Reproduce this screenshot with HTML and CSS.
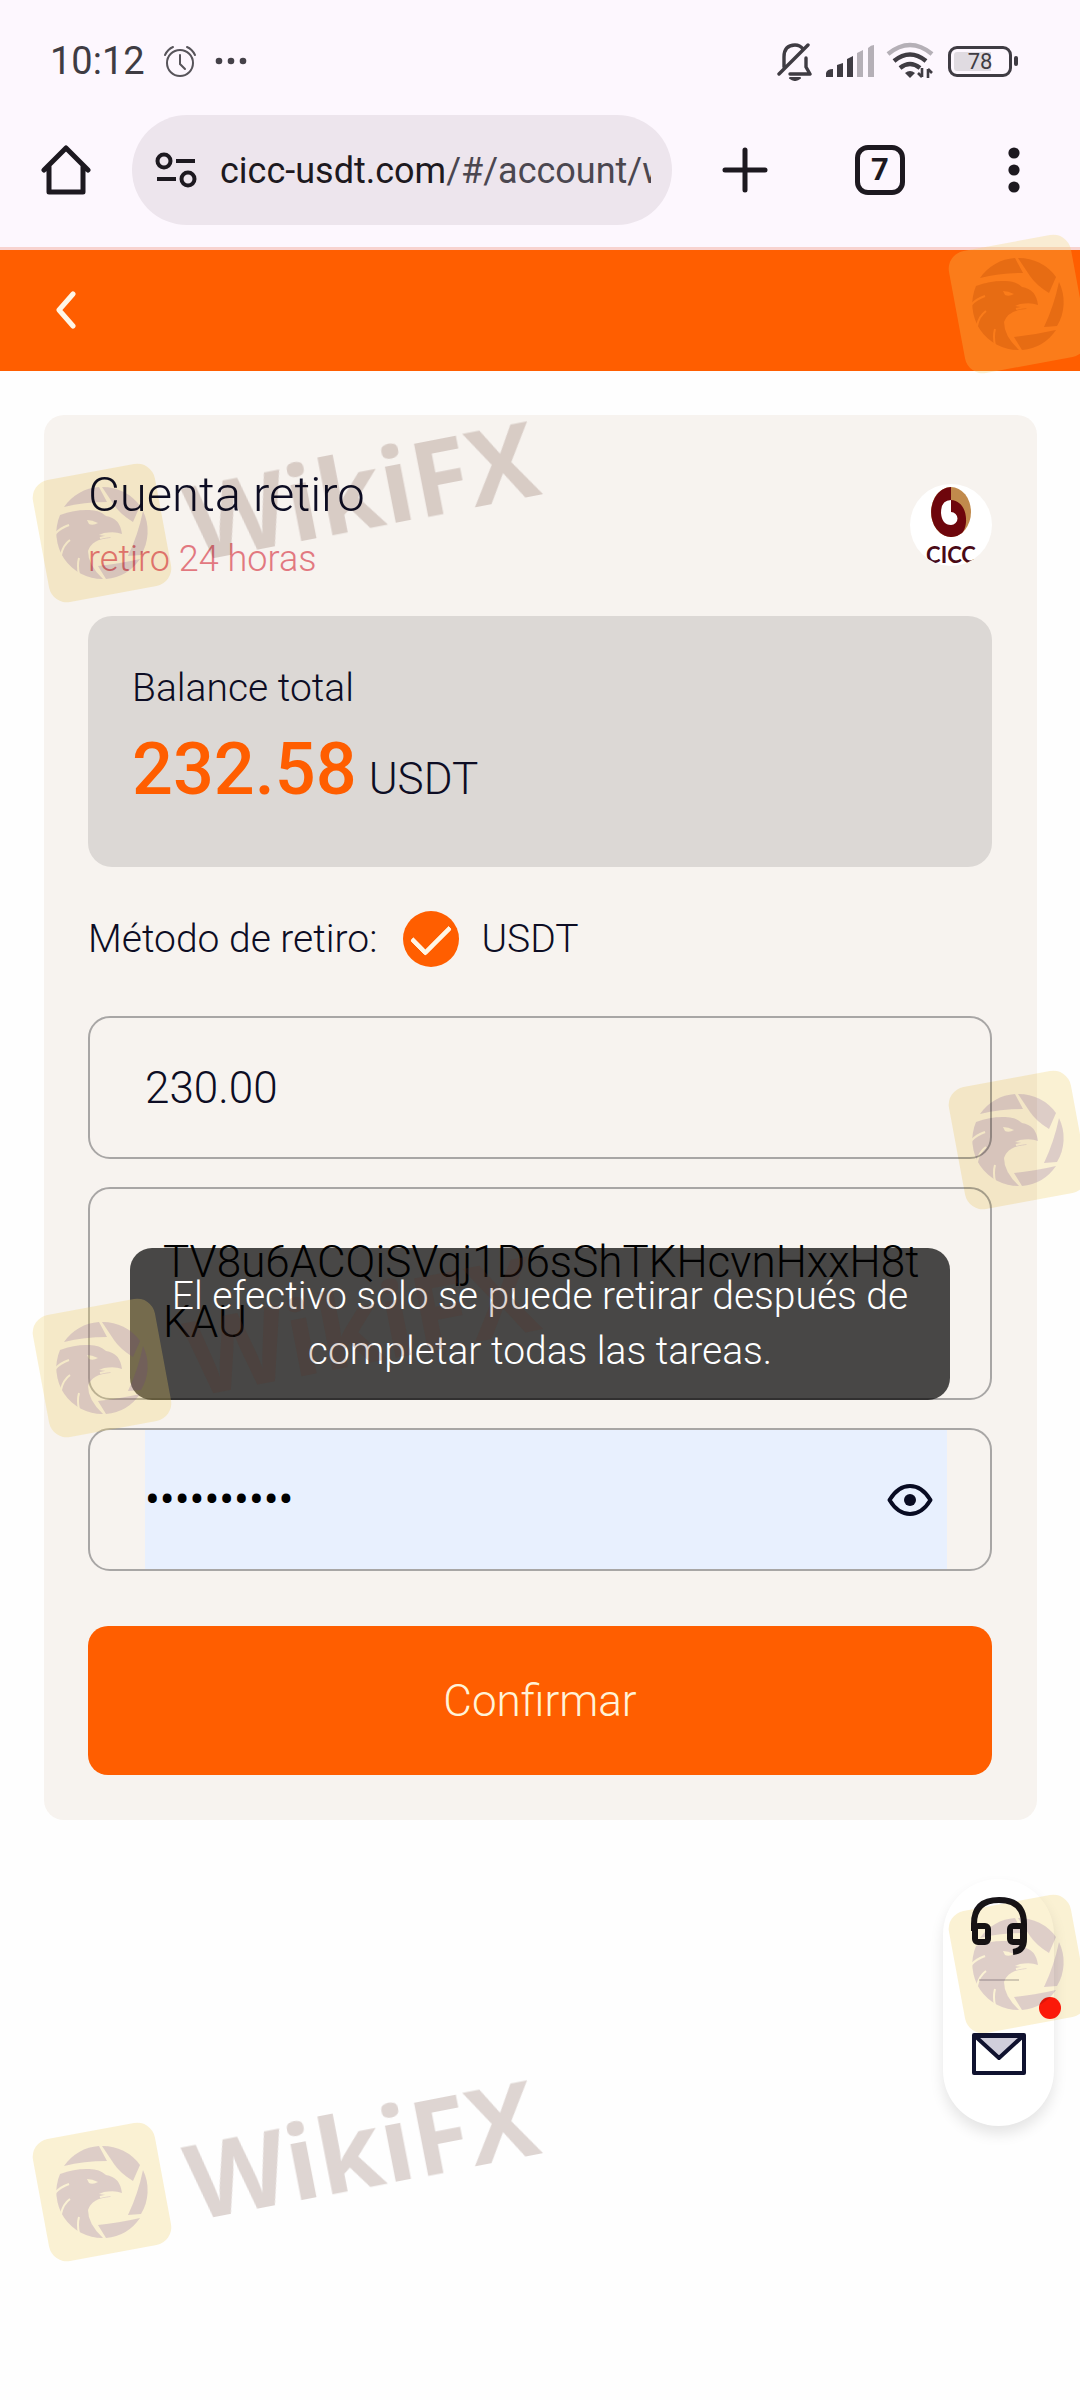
FILE: index.html
```html
<!DOCTYPE html>
<html lang="es">
<head>
<meta charset="utf-8">
<meta name="viewport" content="width=device-width, initial-scale=1">
<title>Cuenta retiro</title>
<link rel="stylesheet" href="styles.css">
</head>
<body>
<svg class="defs" aria-hidden="true">
  <defs>
    <mask id="feathers" maskUnits="userSpaceOnUse" x="-60" y="-60" width="120" height="120">
      <rect x="-60" y="-60" width="120" height="120" fill="#fff"/>
      <path d="M-15 -13Q-10 -13 -4 -10Q-9 -7 -13 -9Z" fill="#000"/>
      <path d="M-47 1Q-42 -5 -33 -8M-41 22Q-39 12 -32 7M-23 42Q-25 32 -23 25M-2 5Q8 2 15 4" fill="none" stroke="#000" stroke-width="2"/>
    </mask>
    <symbol id="badge" viewBox="-80 -80 160 160">
      <rect class="mark-tile" x="-62" y="-62" width="124" height="124" rx="18" transform="rotate(-10.5)"/>
      <g class="mark-bird" mask="url(#feathers)">
        <path d="M-38 -26A46 46 0 0 1 -3 -46L5 -31Q-18 -31 -38 -26Z"/>
        <path d="M0 -46A46 46 0 0 1 38 -27L31 -11Q18 -19 12 -28Z"/>
        <path d="M41 -22A46 46 0 0 1 39 22L26 23Q36 2 41 -22Z"/>
        <path d="M38 26A46 46 0 0 1 4 46L-4 33Q16 31 38 26Z"/>
        <path d="M-42 -18Q-28 -23 -16 -23Q-3 -24 4 -17Q18 -15 20 1Q13 -2 2 0L-3 2Q12 4 8 5Q-10 6 -14 18Q-14 32 1 46A46 46 0 0 1 -42 -18Z"/>
      </g>
    </symbol>
  </defs>
</svg>

<header class="browser">
  <div class="status">
    <span class="clock">10:12</span>
    <svg width="34" height="34" viewBox="0 0 34 34" fill="none" stroke="#57545a" stroke-width="2" stroke-linecap="round"><circle cx="17" cy="19" r="13"/><path d="M17 11v9l5 5M2 11q3-6 8-8M32 11q-3-6-8-8"/></svg>
    <svg class="more" width="32" height="10" viewBox="0 0 32 10" fill="#454249"><circle cx="4" cy="5" r="3.3"/><circle cx="16" cy="5" r="3.3"/><circle cx="28" cy="5" r="3.3"/></svg>
    <span class="spacer"></span>
    <svg width="36" height="40" viewBox="0 0 36 40" fill="none" stroke="#3f3c43" stroke-width="3.4" stroke-linecap="round" stroke-linejoin="round"><path d="M2 33L31 4M7 26V16Q7 4 18 4Q23 4 26 8M29 17V26L33 33H13"/><path d="M13 37h10q-5 4-10 0z" stroke-width="2" fill="#3f3c43"/></svg>
    <svg class="signal" width="50" height="32" viewBox="0 0 50 32"><g fill="#3f3c43"><path d="M1 32v-4q1-4 7-4v8zM12 32V20l6-2v14zM22 32V14l6-3v21z"/></g><g fill="#b5b0b7"><path d="M32 32V8l6-3v27zM43 32V3q3-3 6-3v32z"/></g></svg>
    <svg class="wifi" width="48" height="38" viewBox="0 0 48 38" fill="none" stroke="#3f3c43" stroke-width="4.4"><path d="M2 12Q24 -6 46 12" stroke="#b5b0b7"/><path d="M8 19Q24 6 40 19M14 26Q24 18 34 26"/><path d="M19 31q5-4 10 0l-5 5z" fill="#3f3c43" stroke="none"/><path d="M36 26v9m-4-4l4 4M42 36v-9m4 4l-4-4" stroke-width="2.6"/></svg>
    <div class="battery"><span>78</span></div>
  </div>
  <nav class="toolbar">
    <button class="tool" aria-label="Inicio"><svg width="50" height="50" viewBox="0 0 50 50" fill="none" stroke="#1d1920" stroke-width="5" stroke-linecap="round" stroke-linejoin="round"><path d="M3 25L25 3L47 25M8 21V47H42V21"/></svg></button>
    <div class="address">
      <svg width="42" height="38" viewBox="0 0 42 38" fill="none" stroke="#1d1920" stroke-width="4"><circle cx="9" cy="10" r="6.5"/><circle cx="33" cy="28" r="6.5"/><path d="M21 10h19M2 28h19"/></svg>
      <a class="url" href="#/account/">cicc-usdt.com<span>/#/account/w</span></a>
    </div>
    <div class="tools">
      <button class="tool" aria-label="Nueva pestaña"><svg width="50" height="50" viewBox="0 0 50 50" fill="none" stroke="#1d1920" stroke-width="5" stroke-linecap="round"><path d="M24 5v40M4 25h40"/></svg></button>
      <button class="tool tabs" aria-label="Pestañas">7</button>
      <button class="tool" aria-label="Menú"><svg width="50" height="50" viewBox="0 0 50 50" fill="#1d1920"><circle cx="25" cy="8" r="5.6"/><circle cx="25" cy="25" r="5.6"/><circle cx="25" cy="42" r="5.6"/></svg></button>
    </div>
  </nav>
</header>

<div class="page-bar">
  <a class="back" href="#" aria-label="Volver"><svg width="22" height="38" viewBox="0 0 22 38" fill="none" stroke="#fff6e6" stroke-width="5" stroke-linecap="round" stroke-linejoin="round"><path d="M18 3L4 19L18 35"/></svg></a>
</div>

<main class="card">
  <div class="card-head">
    <div>
      <h1>Cuenta retiro</h1>
      <p class="note">retiro 24 horas</p>
    </div>
    <div class="brand">
      <svg width="40" height="50" viewBox="0 0 40 50"><ellipse cx="20" cy="25" rx="20" ry="25" fill="#c18a4c"/><path d="M20 0A20 25 0 1 0 31 46C38 39 37 14 20 13Z" fill="#6e060c"/><path d="M20 13Q10 13 10 26Q11 38 20 38A6.500 6.500 0 0 0 20 25Z" fill="#fff"/></svg>
      <span>CICC</span>
    </div>
  </div>

  <section class="balance">
    <p class="label">Balance total</p>
    <p class="amount"><strong>232.58</strong><span>USDT</span></p>
  </section>

  <form class="form">
    <div class="method">
      <span>Método de retiro:</span>
      <label class="option"><input type="radio" name="method" checked>USDT</label>
    </div>
    <input class="field" type="text" value="230.00" aria-label="Importe">
    <textarea class="field wallet" aria-label="Dirección" spellcheck="false">TV8u6ACQiSVqj1D6sShTKHcvnHxxH8tKAU</textarea>
    <div class="field secret">
      <div class="filled">
        <input type="password" value="abcdefghij" aria-label="Contraseña">
        <button type="button" class="eye" aria-label="Mostrar"><svg width="46" height="34" viewBox="0 0 46 34"><path d="M2.500 17Q11 3 23 3T43.500 17Q35 31 23 31T2.500 17Z" fill="none" stroke="#080b22" stroke-width="4" stroke-linejoin="round"/><circle cx="23" cy="17" r="6" fill="#080b22"/></svg></button>
      </div>
    </div>
    <button type="button" class="confirm">Confirmar</button>
  </form>
</main>

<div class="toast" role="status">El efectivo solo se puede retirar después de completar todas las tareas.</div>

<aside class="contact">
  <button aria-label="Soporte"><svg width="56" height="58" viewBox="0 0 56 58" fill="none" stroke="#171418" stroke-width="6" stroke-linejoin="round"><path d="M3 34V27Q3 3 28 3T53 27V42Q53 54 42 55"/><rect x="4" y="29" width="13" height="16" rx="3"/><rect x="39" y="29" width="13" height="16" rx="3"/></svg></button>
  <hr>
  <button aria-label="Mensajes"><svg width="54" height="42" viewBox="0 0 54 42" stroke="#10122f" stroke-width="4" stroke-linejoin="round"><path d="M2 2H52V40H2Z" fill="none"/><path d="M3 3L27 25L51 3Z" fill="#d0cedb"/></svg></button>
  <i class="dot"></i>
</aside>

<div class="marks" aria-hidden="true">
  <div class="mark left first"><svg><use href="#badge"/></svg><span>WikiFX</span></div>
  <div class="mark left second"><svg><use href="#badge"/></svg><span>WikiFX</span></div>
  <div class="mark left third"><svg><use href="#badge"/></svg><span>WikiFX</span></div>
  <div class="mark right first"><svg><use href="#badge"/></svg></div>
  <div class="mark right second"><svg><use href="#badge"/></svg></div>
  <div class="mark right third"><svg><use href="#badge"/></svg></div>
</div>
</body>
</html>
```

FILE: styles.css
```css
* { box-sizing: border-box; }

body {
  --tile: rgba(240, 208, 96, .27);
  --bird: rgba(100, 55, 150, .19);
  position: relative;
  min-height: 100vh;
  margin: 0;
  background: #fefefe;
  color: #0d0d24;
  font-family: Roboto, "Liberation Sans", sans-serif;
  font-weight: 300;
}

h1, p { margin: 0; font-weight: 300; }

button, input, textarea {
  margin: 0;
  padding: 0;
  border: 0;
  background: none;
  color: inherit;
  font: inherit;
}

svg { display: block; flex: none; }
.defs { position: absolute; width: 0; height: 0; }

/* browser chrome */
.browser {
  padding-top: 20px;
  background: #fdf7fe;
  border-bottom: 3px solid #f8d3d0;
}

.status {
  display: flex;
  align-items: center;
  height: 82px;
  padding: 0 62px 0 50px;
  color: #3f3c43;
}
.clock { margin-right: 18px; font-size: 38px; font-weight: 400; line-height: 48px; }
.more { margin-left: 18px; }
.spacer { flex: 1; }
.signal { margin-left: 12px; }
.wifi { margin-left: 11px; }
.battery {
  display: flex;
  position: relative;
  justify-content: center;
  align-items: center;
  width: 64px;
  height: 31px;
  margin: 0 6px 0 14px;
  border: 3px solid #3f3c43;
  border-radius: 9px;
  background: linear-gradient(90deg, #e0dbe1 72%, transparent 72%) content-box;
  padding: 3px;
  font-size: 22px;
  font-weight: 400;
}
.battery::after {
  content: "";
  position: absolute;
  right: -9px;
  width: 4px;
  height: 10px;
  border-radius: 2px;
  background: #3f3c43;
}

.toolbar {
  display: flex;
  align-items: center;
  padding: 13px 41px 22px;
}
.tool { width: 50px; height: 50px; flex: none; }
.address {
  display: flex;
  flex: 1;
  align-items: center;
  gap: 23px;
  min-width: 0;
  height: 110px;
  margin: 0 49px 0 41px;
  padding: 0 21px 0 23px;
  border-radius: 55px;
  background: #ede5ed;
}
.url {
  flex: 1;
  overflow: hidden;
  padding-top: 2px;
  color: #1d1920;
  font-size: 36px;
  font-weight: 400;
  line-height: 48px;
  text-decoration: none;
  white-space: nowrap;
}
.url span { color: #4b4750; }
.tools { display: flex; gap: 84px; }
.tabs {
  border: 5px solid #1d1920;
  border-radius: 13px;
  color: #1d1920;
  font-size: 31px;
  font-weight: 700;
  line-height: 40px;
}

.page-bar {
  display: flex;
  align-items: center;
  height: 121px;
  padding: 0 55px 2px;
  background: #ff5e00;
}

/* withdrawal card */
.card {
  margin: 44px 43px 0 44px;
  padding: 52px 45px 45px 44px;
  border-radius: 20px;
  background: #f7f3ef;
}
.card-head {
  display: flex;
  justify-content: space-between;
  align-items: center;
}
.card-head h1 { margin-bottom: 12px; font-size: 49px; line-height: 56px; }
.note { color: #e27880; font-size: 36px; line-height: 48px; }
.brand {
  display: flex;
  flex-direction: column;
  align-items: center;
  gap: 7px;
  overflow: hidden;
  width: 82px;
  height: 82px;
  padding-top: 3px;
  border-radius: 50%;
  background: #fff;
  color: #4a0a16;
  font-family: Lato, sans-serif;
  font-size: 22px;
  font-weight: 700;
  line-height: 22px;
}

.balance {
  margin-top: 33px;
  padding: 48px 44px;
  border-radius: 24px;
  background: #dcd8d5;
}
.label { margin-bottom: 18px; font-size: 39px; line-height: 48px; }
.amount {
  display: flex;
  align-items: baseline;
  gap: 12px;
  font-size: 44px;
  line-height: 80px;
}
.amount strong { color: #ff5e00; font-size: 72px; font-weight: 500; }

.form { display: flex; flex-direction: column; gap: 28px; }
.method {
  display: flex;
  align-items: center;
  gap: 26px;
  margin: 44px 0 21px;
  font-size: 39px;
  line-height: 56px;
}
.option { display: flex; align-items: center; gap: 22px; }
.option input {
  display: grid;
  place-items: center;
  width: 56px;
  height: 56px;
  border-radius: 50%;
  background: #ff5e00;
  appearance: none;
}
.option input::before {
  content: "";
  width: 33px;
  height: 17px;
  margin-top: -8px;
  border: solid #fff6e6;
  border-width: 0 0 5px 5px;
  border-radius: 3px;
  transform: rotate(-45deg);
}

.field {
  display: block;
  width: 100%;
  height: 143px;
  padding: 0 43px 0 55px;
  border: 2px solid #a8a6a5;
  border-radius: 22px;
  font-size: 44px;
  line-height: 60px;
}
.wallet {
  height: 213px;
  padding: 43px 60px 43px 73px;
  color: #000;
  word-break: break-all;
  resize: none;
  overflow: hidden;
}
.filled {
  display: flex;
  align-items: center;
  height: 100%;
  padding-right: 14px;
  background: #e8f0fe;
}
.filled input { flex: 1; min-width: 0; height: 100%; color: #000; font-weight: 400; }
.eye { width: 46px; height: 34px; }

.confirm {
  height: 149px;
  margin-top: 27px;
  border-radius: 20px;
  background: #ff5e00;
  color: #fff3d8;
  font-size: 44px;
}

.toast {
  position: absolute;
  top: 52%;
  left: 12%;
  right: 12%;
  padding: 21px 40px;
  border-radius: 22px;
  background: rgba(0, 0, 0, .71);
  color: #fff;
  font-size: 39px;
  line-height: 55px;
  text-align: center;
}

/* floating contact buttons */
.contact {
  position: absolute;
  right: 26px;
  bottom: 274px;
  display: flex;
  flex-direction: column;
  align-items: center;
  width: 111px;
  padding: 18px 0 51px;
  border-radius: 56px;
  background: #fff;
  box-shadow: 0 8px 14px rgba(0, 0, 0, .1);
}
.contact hr { width: 40px; height: 2px; margin: 24px 0 52px; border: 0; background: #d5d3d8; }
.dot {
  position: absolute;
  top: 118px;
  right: -7px;
  width: 22px;
  height: 22px;
  border-radius: 50%;
  background: #ff1a0a;
}

/* diagonal watermark layer */
.mark {
  position: absolute;
  width: 160px;
  height: 160px;
  pointer-events: none;
  mix-blend-mode: multiply;
}
body { overflow-x: hidden; }
.mark svg { width: 160px; height: 160px; }
.mark span {
  position: absolute;
  left: 171px;
  bottom: 39px;
  color: rgba(95, 50, 35, .2);
  font-family: "Open Sans", sans-serif;
  font-size: 104px;
  font-weight: 700;
  line-height: 104px;
  transform: rotate(-11deg);
  transform-origin: 0 80%;
}
.left { left: 22px; }
.right { right: -18px; }
.left.first { top: 453px; }
.left.second { top: 1288px; mix-blend-mode: normal; }
.left.third { top: 2112px; }
.right.first { top: 224px; --bird: rgba(170, 60, 0, .25); mix-blend-mode: normal; }
.right.second { top: 1060px; }
.right.third { top: 1884px; }
.mark-tile { fill: var(--tile); }
.mark-bird { fill: var(--bird); }
```
